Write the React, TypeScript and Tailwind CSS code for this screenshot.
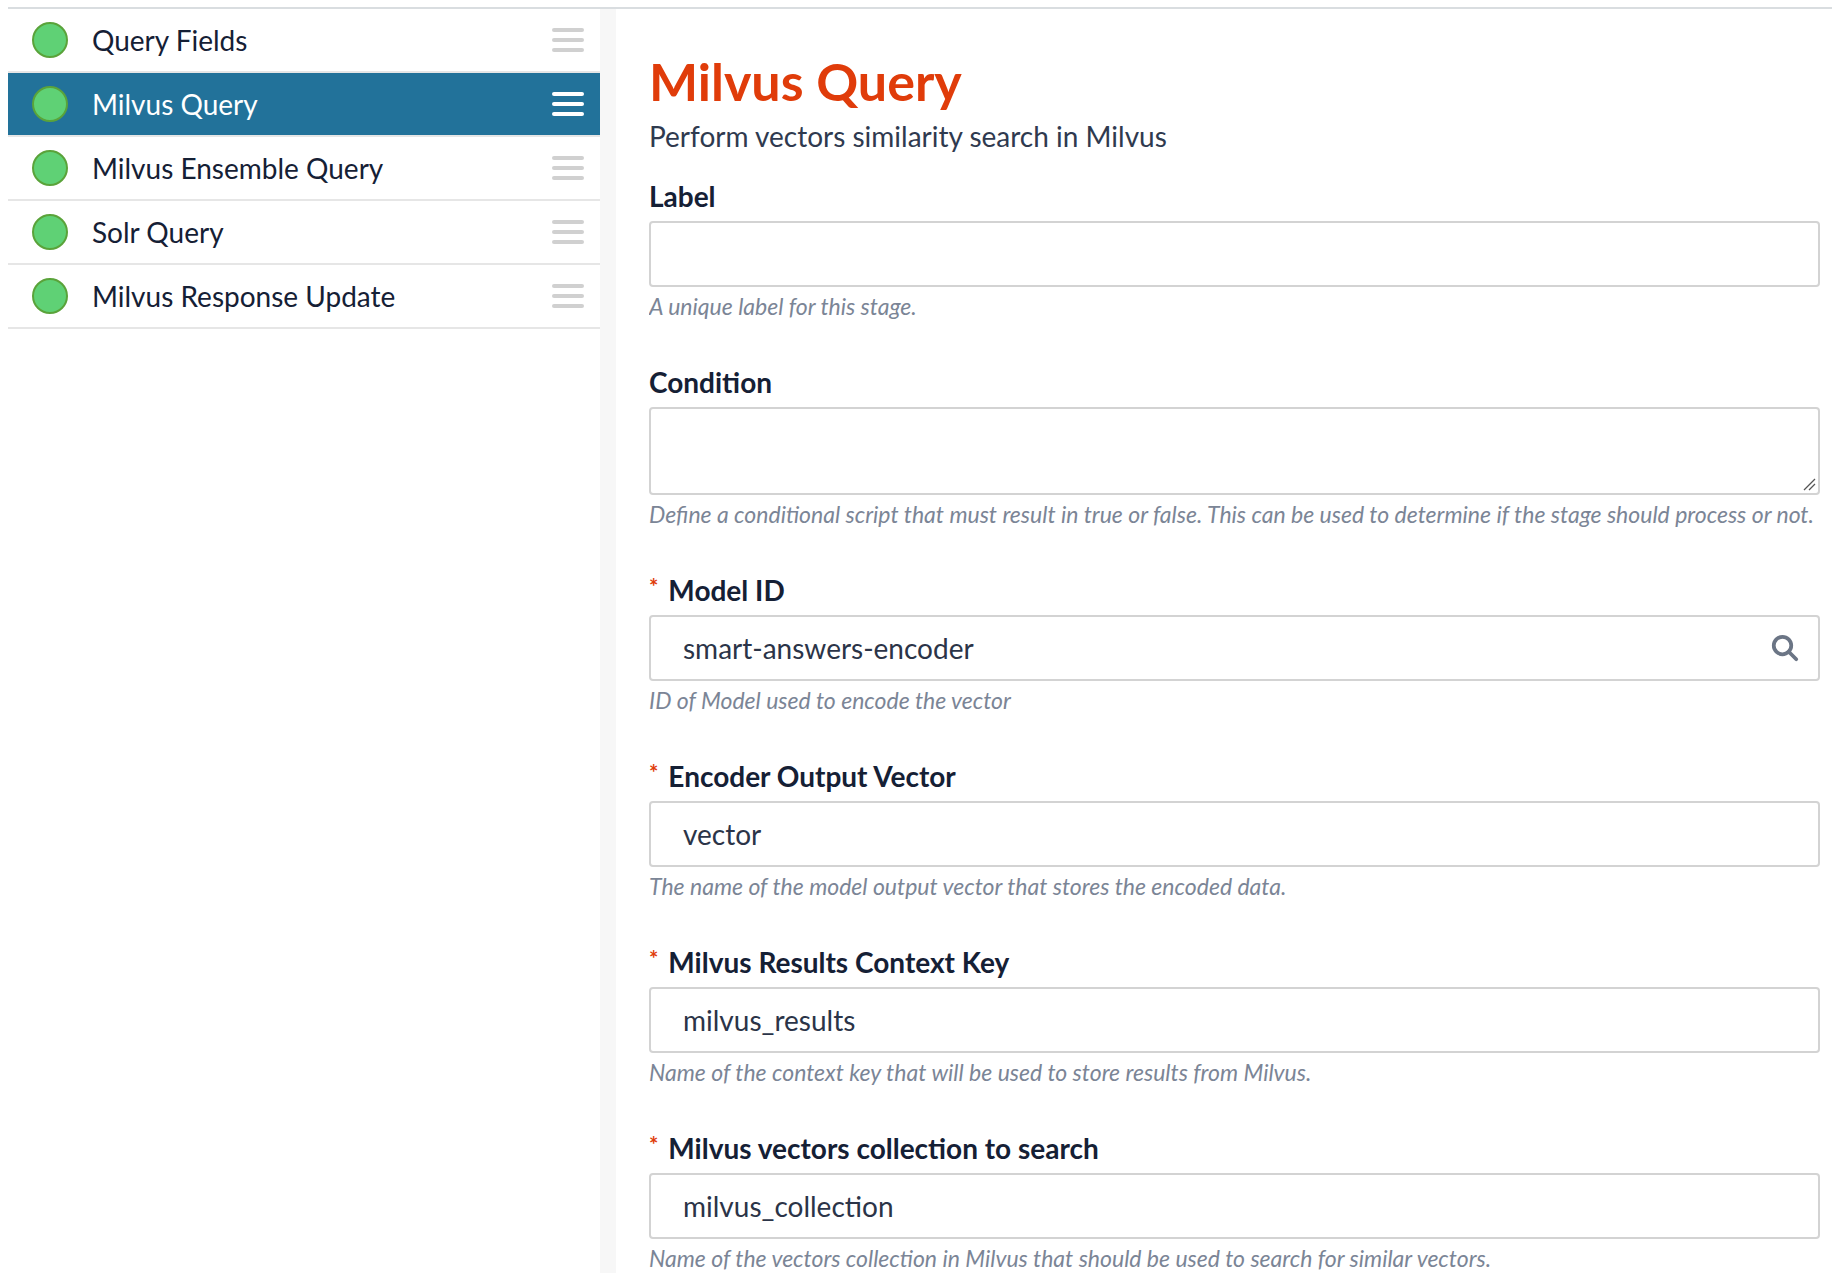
import React from "react";

const items = ["Query Fields", "Milvus Query", "Milvus Ensemble Query", "Solr Query", "Milvus Response Update"];

function Burger({ active }: { active: boolean }) {
  const c = active ? "bg-white" : "bg-[#d0d0d0]";
  return (
    <div className="flex flex-col gap-[6px] w-[32px]">
      <div className={`h-[4px] rounded ${c}`} />
      <div className={`h-[4px] rounded ${c}`} />
      <div className={`h-[4px] rounded ${c}`} />
    </div>
  );
}

function Field({ label, req, value, help, search, area, mt }: { label: string; req?: boolean; value?: string; help: string; search?: boolean; area?: boolean; mt: string }) {
  return (
    <div className={mt}>
      <div className="text-[28px] font-bold text-[#152035] leading-[34px] flex items-center">
        {req && <span className="text-[#e03c0a] text-[22px] mr-[10px] -mt-[6px]">*</span>}
        {label}
      </div>
      <div className={`mt-[8px] border-2 border-[#d3d3d3] rounded-[4px] bg-white flex items-center pl-[32px] pr-[26px] ${area ? "h-[88px] relative" : "h-[66px]"}`}>
        <span className="text-[28px] text-[#2b3448]">{value}</span>
        {search && (
          <svg className="ml-auto -mr-[8px]" width="30" height="30" viewBox="0 0 24 24" fill="none" stroke="#6b7585" strokeWidth="3" strokeLinecap="round">
            <circle cx="10" cy="10" r="7" />
            <path d="M15 15l6 6" />
          </svg>
        )}
        {area && (
          <svg className="absolute right-[2px] bottom-[2px]" width="14" height="14" viewBox="0 0 14 14" stroke="#555" strokeWidth="1.3">
            <path d="M2 13L13 2M7 13L13 7" />
          </svg>
        )}
      </div>
      <div className="mt-[4px] text-[23px] leading-[30px] italic text-[#7b8596] whitespace-nowrap overflow-hidden text-ellipsis">{help}</div>
    </div>
  );
}

export default function App() {
  return (
    <div className="w-[1832px] h-[1288px] bg-white overflow-hidden" style={{ fontFamily: "Lato, 'Open Sans', sans-serif" }}>
      <div className="h-[7px] bg-white" />
      <div className="h-[2px] bg-[#d9dde0] ml-[8px]" />
      <div className="flex h-[1264px]">
        <div className="w-[8px] bg-white" />
        <div className="w-[592px] bg-white flex flex-col">
          {items.map((t, i) => {
            const active = i === 1;
            return (
              <div key={t} className={`h-[64px] flex items-center border-b-2 border-[#e6e6e6] pl-[24px] pr-[16px] ${active ? "bg-[#22729a]" : "bg-white"}`}>
                <div className="w-[36px] h-[36px] rounded-full bg-[#5fd175] border-2 border-[#5aa33a]" />
                <div className={`ml-[24px] text-[28px] ${active ? "text-white" : "text-[#152035]"}`}>{t}</div>
                <div className="ml-auto"><Burger active={active} /></div>
              </div>
            );
          })}
        </div>
        <div className="w-[16px] bg-[#f7f7f7]" />
        <div className="flex-1 pl-[33px] pr-[12px] pt-[40px]">
          <div className="text-[52px] font-bold text-[#e03c0a] leading-[64px]">Milvus Query</div>
          <div className="text-[28px] text-[#2f3a4f] mt-[2px]">Perform vectors similarity search in Milvus</div>
          <Field mt="mt-[22px]" label="Label" help="A unique label for this stage." />
          <Field mt="mt-[44px]" label="Condition" area help="Define a conditional script that must result in true or false. This can be used to determine if the stage should process or not." />
          <Field mt="mt-[44px]" label="Model ID" req value="smart-answers-encoder" search help="ID of Model used to encode the vector" />
          <Field mt="mt-[44px]" label="Encoder Output Vector" req value="vector" help="The name of the model output vector that stores the encoded data." />
          <Field mt="mt-[44px]" label="Milvus Results Context Key" req value="milvus_results" help="Name of the context key that will be used to store results from Milvus." />
          <Field mt="mt-[44px]" label="Milvus vectors collection to search" req value="milvus_collection" help="Name of the vectors collection in Milvus that should be used to search for similar vectors." />
        </div>
      </div>
    </div>
  );
}
